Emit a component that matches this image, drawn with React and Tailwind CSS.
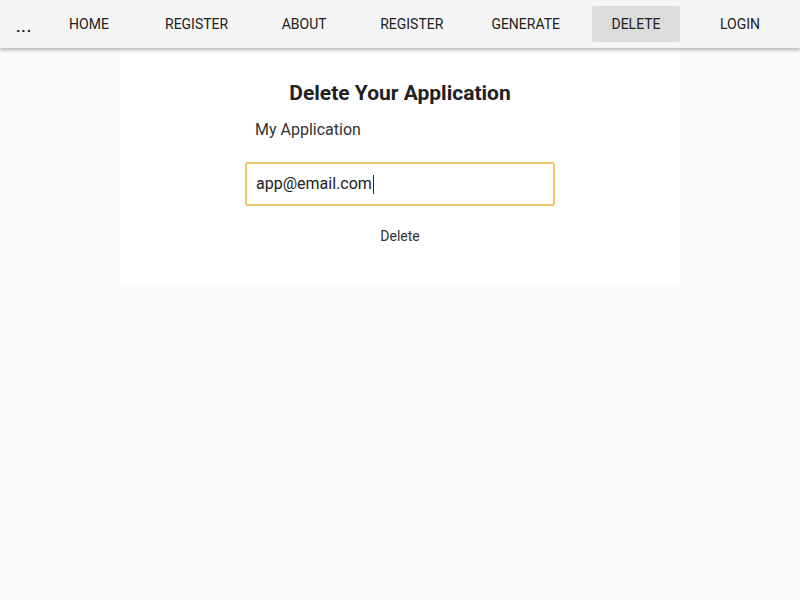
import React from 'react';

const links = ['HOME', 'REGISTER', 'ABOUT', 'REGISTER', 'GENERATE', 'DELETE', 'LOGIN'];

function NavBar() {
  return (
    <nav className="h-[48px] bg-[#f5f5f5] shadow-[0_2px_4px_rgba(0,0,0,0.3)] flex items-center gap-4 relative z-10">
      <div className="w-[29px] h-[36px] pl-[16px] pt-[11px] text-[15px] leading-[20px] font-bold tracking-[1px] text-[#212121]">...</div>
      {links.map((l, i) => (
        <button
          key={i}
          className={`h-[36px] min-w-[88px] px-4 rounded-[2px] text-[14px] font-normal text-[#212121] ${l === 'DELETE' ? 'bg-[#dcdcdc]' : ''}`}
        >
          {l}
        </button>
      ))}
    </nav>
  );
}

export default function App() {
  return (
    <div className="min-h-[600px] bg-[#fafafa] font-['Roboto',sans-serif]">
      <NavBar />
      <div className="w-[560px] mx-auto bg-white h-[236px] flex flex-col items-center">
        <h1 className="mt-[33px] text-[21px] leading-[25px] font-bold text-[#212121]">Delete Your Application</h1>
        <div className="w-[310px] mt-[14px] pl-[10px] text-[16px] leading-[20px] text-[#333]">My Application</div>
        <div className="w-[310px] h-[44px] mt-[22px] border-2 border-[#f2c56f] rounded-[3px] flex items-center pl-[9px] text-[16px] text-[#222]">
          app@email.com<span className="inline-block w-px h-[19px] bg-[#222] ml-[1px]"></span>
        </div>
        <button className="mt-[22px] text-[14px] leading-[16px] text-[#333]">Delete</button>
      </div>
    </div>
  );
}
